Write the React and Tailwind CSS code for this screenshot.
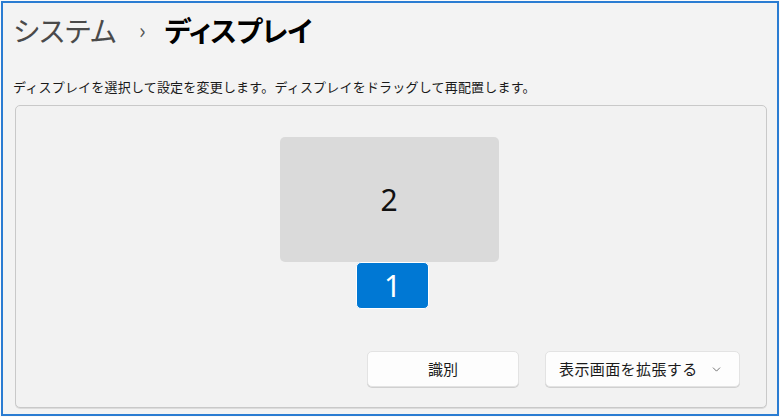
import { ChevronDown } from "lucide-react";

const jp = "font-['Noto_Sans_CJK_JP','Noto_Sans',sans-serif]";

const App = () => {
    return (
        <div className="w-[780px] h-[417px] bg-[#fafafa] p-px">
            <div className={`h-full border-2 border-[#2a7cd2] bg-[#f3f3f3] flex flex-col ${jp}`}>
                {/* Header */}
                <div className="flex items-center pl-[10px] pt-[4px] h-[50px] [font-feature-settings:'palt']">
                    <span className="text-[28px] text-[#4a4a4a] tracking-[0.5px]">システム</span>
                    <span className="text-[22px] text-[#555] ml-[22px] mr-[19px] mt-[-2px]">›</span>
                    <span className="text-[28px] font-semibold text-black tracking-[-0.5px]">ディスプレイ</span>
                </div>

                <p className="pl-[10px] mt-[25px] text-[13px] text-[#1a1a1a] leading-[18px] tracking-[0.2px]">
                    ディスプレイを選択して設定を変更します。ディスプレイをドラッグして再配置します。
                </p>

                {/* Arrangement card */}
                <div className="ml-[12px] mr-[10px] mt-[9px] h-[303px] rounded-[5px] border border-[#c9c9c9] bg-[#f2f2f2] shadow-[0_1px_0_#dcdcdc] flex flex-col">
                    <div className="flex flex-col items-center pt-[31px]">
                        <div className="w-[219px] h-[125px] rounded-[5px] bg-[#dadada] flex items-center justify-center ml-[-4px]">
                            <span className="font-['Noto_Sans',sans-serif] text-[30px] text-[#111] leading-none">2</span>
                        </div>
                        <div className="w-[73px] h-[47px] rounded-[5px] bg-[#0078d4] border border-white flex items-center justify-center ml-[3px]">
                            <span className="font-['Noto_Sans',sans-serif] text-[30px] text-white leading-none">1</span>
                        </div>
                    </div>

                    <div className="flex justify-end gap-[26px] pr-[26px] mt-auto mb-[20px]">
                        <button className="w-[152px] h-[36px] rounded-[5px] bg-[#fdfdfd] border border-[#e3e3e3] shadow-[0_1px_0_#d0d0d0] text-[15px] text-[#1a1a1a]">
                            識別
                        </button>
                        <button className="w-[195px] h-[36px] rounded-[5px] bg-[#fdfdfd] border border-[#e3e3e3] shadow-[0_1px_0_#d0d0d0] text-[15px] text-[#1a1a1a] flex items-center pl-[13px] pr-[16px]">
                            <span className="flex-1 text-left tracking-[0.4px]">表示画面を拡張する</span>
                            <ChevronDown size={13} strokeWidth={1.5} className="text-[#555]" />
                        </button>
                    </div>
                </div>
            </div>
        </div>
    );
};

export default App;
